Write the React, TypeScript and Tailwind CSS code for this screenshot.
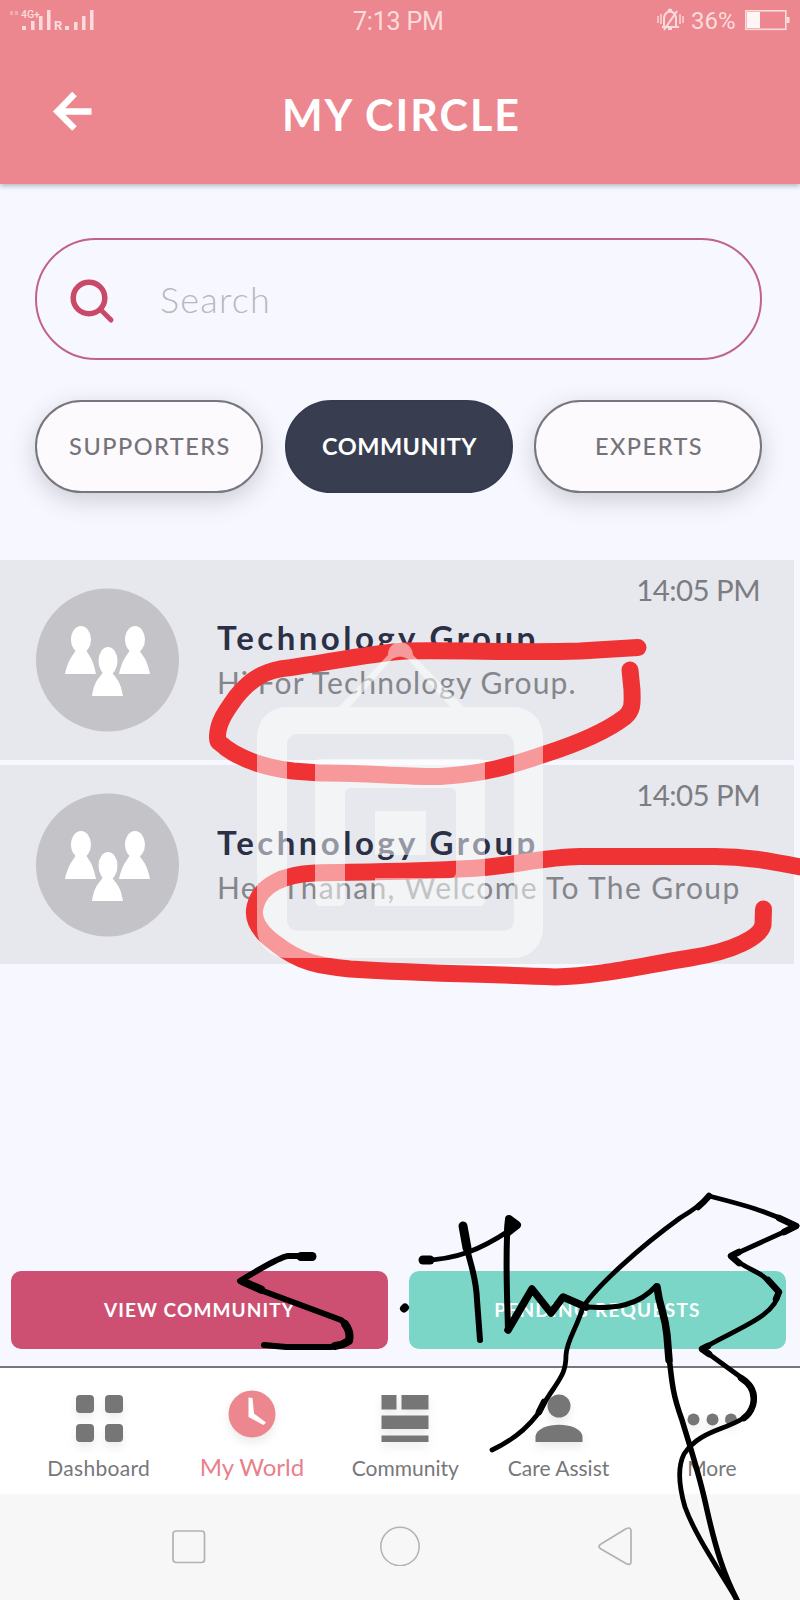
import type { ReactNode } from "react";

const LATO = "font-['Lato',sans-serif]";

function StatusBar() {
  return (
    <div className="flex h-10 items-center justify-between pl-2 pr-2.5 text-[#fbdcdd]">
      <svg className="h-10 w-[134px]" viewBox="8 0 134 40" fill="currentColor">
        <g opacity="0.45">
          <rect x="10" y="11" width="3" height="4" />
          <rect x="15" y="11" width="3" height="4" />
        </g>
        <text x="21" y="18" fontSize="10.500" fontWeight="500" fontFamily="Roboto, sans-serif">4G+</text>
        <rect x="22" y="26" width="4" height="4" />
        <rect x="31" y="21" width="3.500" height="9" />
        <rect x="39" y="16" width="3.500" height="14" />
        <rect x="47" y="10" width="3.500" height="20" />
        <text x="54" y="30" fontSize="13" fontWeight="700" fontFamily="Roboto, sans-serif">R</text>
        <rect x="65" y="26" width="4" height="4" />
        <rect x="74" y="22" width="3.500" height="8" />
        <rect x="82" y="16" width="3.500" height="14" />
        <rect x="90" y="10" width="3.500" height="20" />
      </svg>
      <div className="mt-[3px] w-[92px] whitespace-nowrap font-['Roboto',sans-serif] text-[25px] leading-none tracking-[-0.2px]">7:13 PM</div>
      <div className="flex items-center">
        <svg className="h-10 w-[28px]" viewBox="655 0 28 40" fill="none" stroke="currentColor" strokeWidth="2">
          <path d="M661 27h17M663 26v-7c0-10 12-10 12 0v7M667 10.500l2-1 2 1M667 29h4" />
          <path d="M676 11L663 30" />
          <path d="M657 16v7M660 14v10M679 14v10M682 16v7" strokeWidth="1.400" />
        </svg>
        <span className="ml-[7px] mt-px w-[48px] whitespace-nowrap font-['Roboto',sans-serif] text-[24px] leading-none">36%</span>
        <svg className="ml-[5px] h-10 w-[46px]" viewBox="743 0 46 40">
          <rect x="744.800" y="10.800" width="40" height="18.500" fill="none" stroke="currentColor" strokeWidth="1.600" />
          <rect x="746" y="12" width="13" height="16" fill="#fff5f4" />
          <rect x="785.500" y="17" width="3" height="6" fill="currentColor" />
        </svg>
      </div>
    </div>
  );
}

function Header() {
  return (
    <header className="relative h-[184px] bg-[#ed878f] shadow-[0_2px_5px_rgba(70,80,110,0.4)]">
      <StatusBar />
      <div className="relative flex h-[144px] items-start justify-center pl-[3px] pt-[50px]">
        <svg className="absolute left-[52px] top-[51px] h-10 w-10" viewBox="0 0 40 40" fill="none" stroke="#fff" strokeWidth="6.500">
          <path d="M22.500 3L5.500 20.500l17 17M5 20.500h34.500" />
        </svg>
        <h1 className={LATO + " whitespace-nowrap text-[43px] font-bold leading-[50px] tracking-[2px] text-white"}>MY CIRCLE</h1>
      </div>
    </header>
  );
}

function Search() {
  return (
    <div className="ml-[35px] mt-[54px] flex h-[122px] w-[727px] items-center rounded-[61px] border-2 border-[#bf6485]">
      <svg className="ml-[32px] mt-[5px] h-12 w-12" viewBox="0 0 48 48" fill="none" stroke="#c94a68" strokeLinecap="round">
        <circle cx="20" cy="20" r="15.800" strokeWidth="5.500" />
        <path d="M32 32l10 10" strokeWidth="5" />
      </svg>
      <span className={LATO + " ml-[43px] text-[36px] font-light leading-none tracking-[1.2px] text-[#b8b8be]"}>Search</span>
    </div>
  );
}

function Pill({ children, active }: { children: ReactNode; active?: boolean }) {
  return (
    <button
      className={
        LATO +
        " flex h-[93px] w-[228px] items-center justify-center rounded-[47px] border-2 pl-[2px] text-[23.500px] leading-none " +
        (active
          ? "border-[#353c50] bg-[#383e50] font-bold tracking-[0.5px] text-white"
          : "border-[#77757f] bg-[#fdfafd] font-medium tracking-[1.5px] text-[#74737a] shadow-[0_7px_24px_rgba(60,60,70,0.23)]")
      }
    >
      {children}
    </button>
  );
}

function Avatar() {
  return (
    <svg className="ml-9 mt-[28px] h-[144px] w-[144px] shrink-0" viewBox="0 0 144 144">
      <circle cx="71.500" cy="72" r="71.500" fill="#c4c3c8" />
      <g fill="#fff">
        <ellipse cx="45" cy="51.500" rx="10" ry="13.500" />
        <path d="M40 59c0 8-6 6-11 27h31c-4-21-10-19-10-27z" />
        <ellipse cx="99" cy="51.500" rx="10" ry="13.500" />
        <path d="M94 59c0 8-6 6-11 27h31c-4-21-11-19-11-27z" />
        <ellipse cx="72" cy="73" rx="9.500" ry="14" />
        <path d="M67 82c0 7-8 6-11 26h31c-3-20-11-19-11-26z" />
      </g>
    </svg>
  );
}

function ChatRow({ message, track }: { message: string; track: string }) {
  return (
    <div className="flex h-[199.500px] w-[794px] bg-[#e7e8ed]">
      <Avatar />
      <div className="ml-[37px] flex grow flex-col">
        <div className={LATO + " mr-[34px] mt-[12px] self-end whitespace-nowrap text-[29.500px] leading-9 tracking-[-0.600px] text-[#7c7d82]"}>14:05 PM</div>
        <div className={LATO + " mt-[9px] whitespace-nowrap text-[33px] font-bold leading-[40px] tracking-[3.450px] text-[#2b3046]"}>Technology Group</div>
        <div className={LATO + " mt-[7px] whitespace-nowrap text-[30px] leading-9 text-[#85868b] " + track}>{message}</div>
      </div>
    </div>
  );
}

function Action({ label, color }: { label: string; color: string }) {
  return (
    <button className={LATO + " h-[78px] w-[377px] rounded-[10px] pb-[2px] text-[19px] font-bold leading-none text-white " + color}>
      {label}
    </button>
  );
}

function NavItem({ label, text, children }: { label: string; text: string; children: ReactNode }) {
  return (
    <div className="flex w-[153.300px] flex-col items-center">
      <svg className="mt-[24px] h-[52px] w-[52px] overflow-visible drop-shadow-[0_5px_5px_rgba(0,0,0,0.08)]" viewBox="0 0 52 52" fill="#767676">
        {children}
      </svg>
      <span className={LATO + " flex h-9 items-center whitespace-nowrap leading-none " + text}>{label}</span>
    </div>
  );
}

function Nav() {
  return (
    <nav className="flex h-[128px] border-t-2 border-[#77767e] bg-white pl-[22px]">
      <NavItem label="Dashboard" text="mt-[5px] text-[21px] tracking-[0.3px] text-[#77777a]">
        <rect x="3" y="3" width="18" height="18" rx="4" />
        <rect x="32" y="3" width="18" height="18" rx="4" />
        <rect x="3" y="32" width="18" height="18" rx="4" />
        <rect x="32" y="32" width="18" height="18" rx="4" />
      </NavItem>
      <NavItem label="My World" text="mt-[5px] text-[24px] text-[#e9808c]">
        <circle cx="26" cy="22" r="23.500" fill="#ed878f" />
        <path d="M22.500 5.500l4 .5 1.500 15.500 12 9-2.500 2.500L22.500 25z" fill="#fff" />
      </NavItem>
      <NavItem label="Community" text="mt-[5px] text-[21px] text-[#77777a]">
        <path d="M2.500 3h15v14.500h-15zM22.500 3h27v14.500h-27zM2.500 23.500h47V37h-47zM2.500 43.500h47V50h-47z" />
      </NavItem>
      <NavItem label="Care Assist" text="mt-[5px] text-[21px] text-[#77777a]">
        <circle cx="26" cy="14" r="11.500" />
        <path d="M2.500 50v-6c3-15 44-15 47 0v6z" />
      </NavItem>
      <NavItem label="More" text="mt-[5px] text-[21px] text-[#77777a]">
        <circle cx="7.500" cy="27.500" r="6" />
        <circle cx="26.500" cy="27.500" r="6" />
        <circle cx="45" cy="27.500" r="6" />
      </NavItem>
    </nav>
  );
}

function SystemKeys() {
  return (
    <div className="flex h-[106px] items-start bg-[#f7f7f7] pt-[32px]">
      <svg className="ml-[168px] h-10 w-10" viewBox="0 0 40 40" fill="none" stroke="#b2b2b2" strokeWidth="1.700">
        <rect x="5" y="5" width="31.500" height="31.500" rx="3" />
      </svg>
      <svg className="ml-[171px] h-10 w-[42px]" viewBox="0 0 42 40" fill="none" stroke="#b2b2b2" strokeWidth="1.500">
        <circle cx="21" cy="20.500" r="19.200" />
      </svg>
      <svg className="ml-[174px] h-10 w-10" viewBox="0 0 40 40" fill="none" stroke="#b2b2b2" strokeWidth="1.700" strokeLinejoin="round">
        <path d="M6 18L31 2.800Q36 .5 36 5v30.500Q36 40 31 37.500L6 23q-4-2.500 0-5z" />
      </svg>
    </div>
  );
}

/* Hand-drawn markup and the stamp that lie over the whole screen. */
function Annotations() {
  return (
    <svg className="pointer-events-none absolute left-0 top-0 h-[1600px] w-[800px]" viewBox="0 0 800 1600" fill="none" strokeLinecap="round" strokeLinejoin="round">
      <g stroke="#ef3335" strokeWidth="17">
        <path d="M638 647.500L580 651C520 653 465 650 405 651C365 654 315 665 280 669C258 673 246 685 236 697C226 711 218 722 217.500 736C217 744 220 742 226 748C240 758 260 767 293 771L320 773C360 772 400 777 440 776.500C485 774 510 766 545 754C570 746 604 733 625 717C634 709 632 701 632 690L630 670" />
        <path d="M808 868C785 865 760 857 715 856.500H580C540 857 510 867 470 868.500C410 872 355 872 315 873C284 874 260 885 255 907C252 920 260 932 275 943C300 963 320 966 350 969C430 974 490 974 555 977C600 976 640 966 690 958C735 951 760 937 763 925L763.500 909" />
      </g>
      <g fill="#fff" fillOpacity="0.5">
        <path fillRule="evenodd" d="M286 707H514A29 29 0 0 1 543 736V929A29 29 0 0 1 514 958H286A29 29 0 0 1 257 929V736A29 29 0 0 1 286 707ZM297 734A10 10 0 0 0 287 744V920A10 10 0 0 0 297 930.500H504A10 10 0 0 0 514 920V744A10 10 0 0 0 504 734Z" />
        <path d="M321 759H479Q485 759 485 765V900Q485 906 479 906H375V878H450Q456 878 456 872V794Q456 788 450 788H351Q345 788 345 794V900Q345 906 339 906H321Q315 906 315 900V765Q315 759 321 759Z" />
        <rect x="375" y="811" width="51" height="44" />
        <path d="M339 707L388 655C388 638 412 638 413 655L464 707H450L408 659Q400 654 392 659L350 707Z" />
      </g>
      <g stroke="#000">
        <path d="M312 1256H288Q279 1257 240 1281L263 1291L341 1320Q350 1326 350 1337Q345 1345 331 1347H286L264 1345" strokeWidth="6" />
        <path d="M301 1256.500h11" strokeWidth="9" />
        <path d="M243 1281.500l18 8M345 1324q6 8 4 17q-6 4-14 5" strokeWidth="8" />
        <path d="M405 1307.500l-1 1" strokeWidth="8" />
        <path d="M423 1260C455 1260 480 1250 510 1230" strokeWidth="5" />
        <path d="M423 1260h7" strokeWidth="9" />
        <path d="M509 1219l8 6l-9 7z" strokeWidth="8" fill="#000" />
        <path d="M463 1225C465 1255 476 1268 477 1300L480 1340" strokeWidth="6" />
        <path d="M463 1226l4 22" strokeWidth="9" />
        <path d="M508 1220C505 1255 507 1290 508 1330" strokeWidth="6" />
        <path d="M508 1330L532 1289L551 1313L563 1297L586 1307" strokeWidth="7.500" />
        <path d="M586 1307C615 1309 638 1306 656 1286" strokeWidth="5" />
        <path d="M657 1286C660 1310 665 1313 667 1335C672 1390 674 1398 682 1420C690 1447 699 1472 707 1510C716 1550 724 1575 737 1600" strokeWidth="5.500" />
        <path d="M657 1287C660 1310 665 1313 667 1335L669 1360" strokeWidth="7.500" />
        <path d="M492 1450Q520 1437 537 1415Q547 1398 554 1388C562 1376 566 1370 566 1355C567 1340 576 1330 583 1307C598 1285 640 1247 680 1218Q700 1206 709 1196C740 1204 765 1210 797 1226L731 1256C745 1269 760 1272 764 1277Q773 1284 779 1292C776 1317 735 1329 702 1349L746 1381Q757 1391 753 1405Q750 1415 742 1419C722 1431 700 1431 684 1454C676 1470 680 1490 685 1507C695 1535 718 1568 737 1600" strokeWidth="4.800" />
        <path d="M698 1207Q704 1202 709 1196M779 1218l17 8l-12 6M739 1252l-8 4l8 7M768 1280l11 12l-3 7M708 1346l-6 3l7 5M741 1378q16 10 12 27q-3 9-9 13M539 1412l5-10" strokeWidth="6.500" />
      </g>
    </svg>
  );
}

export default function App() {
  return (
    <div className="relative flex h-[1600px] w-[800px] flex-col overflow-hidden bg-[#f7f8ff]">
      <Header />
      <Search />
      <div className="ml-[35px] mt-[40px] flex gap-[21.500px]">
        <Pill>SUPPORTERS</Pill>
        <Pill active>COMMUNITY</Pill>
        <Pill>EXPERTS</Pill>
      </div>
      <div className="mt-[67px] flex flex-col gap-[5px]">
        <ChatRow message="Hi For Technology Group." track="tracking-[1.080px]" />
        <ChatRow message="Hey Thanan, Welcome To The Group" track="tracking-[1.370px]" />
      </div>
      <div className="ml-[11px] mt-[307px] flex gap-[21px]">
        <Action label="VIEW COMMUNITY" color="bg-[#cd5072] tracking-[1.100px]" />
        <Action label="PENDING REQUESTS" color="bg-[#7bd6c7] tracking-[1.300px]" />
      </div>
      <div className="mt-[17px]">
        <Nav />
        <SystemKeys />
      </div>
      <Annotations />
    </div>
  );
}
